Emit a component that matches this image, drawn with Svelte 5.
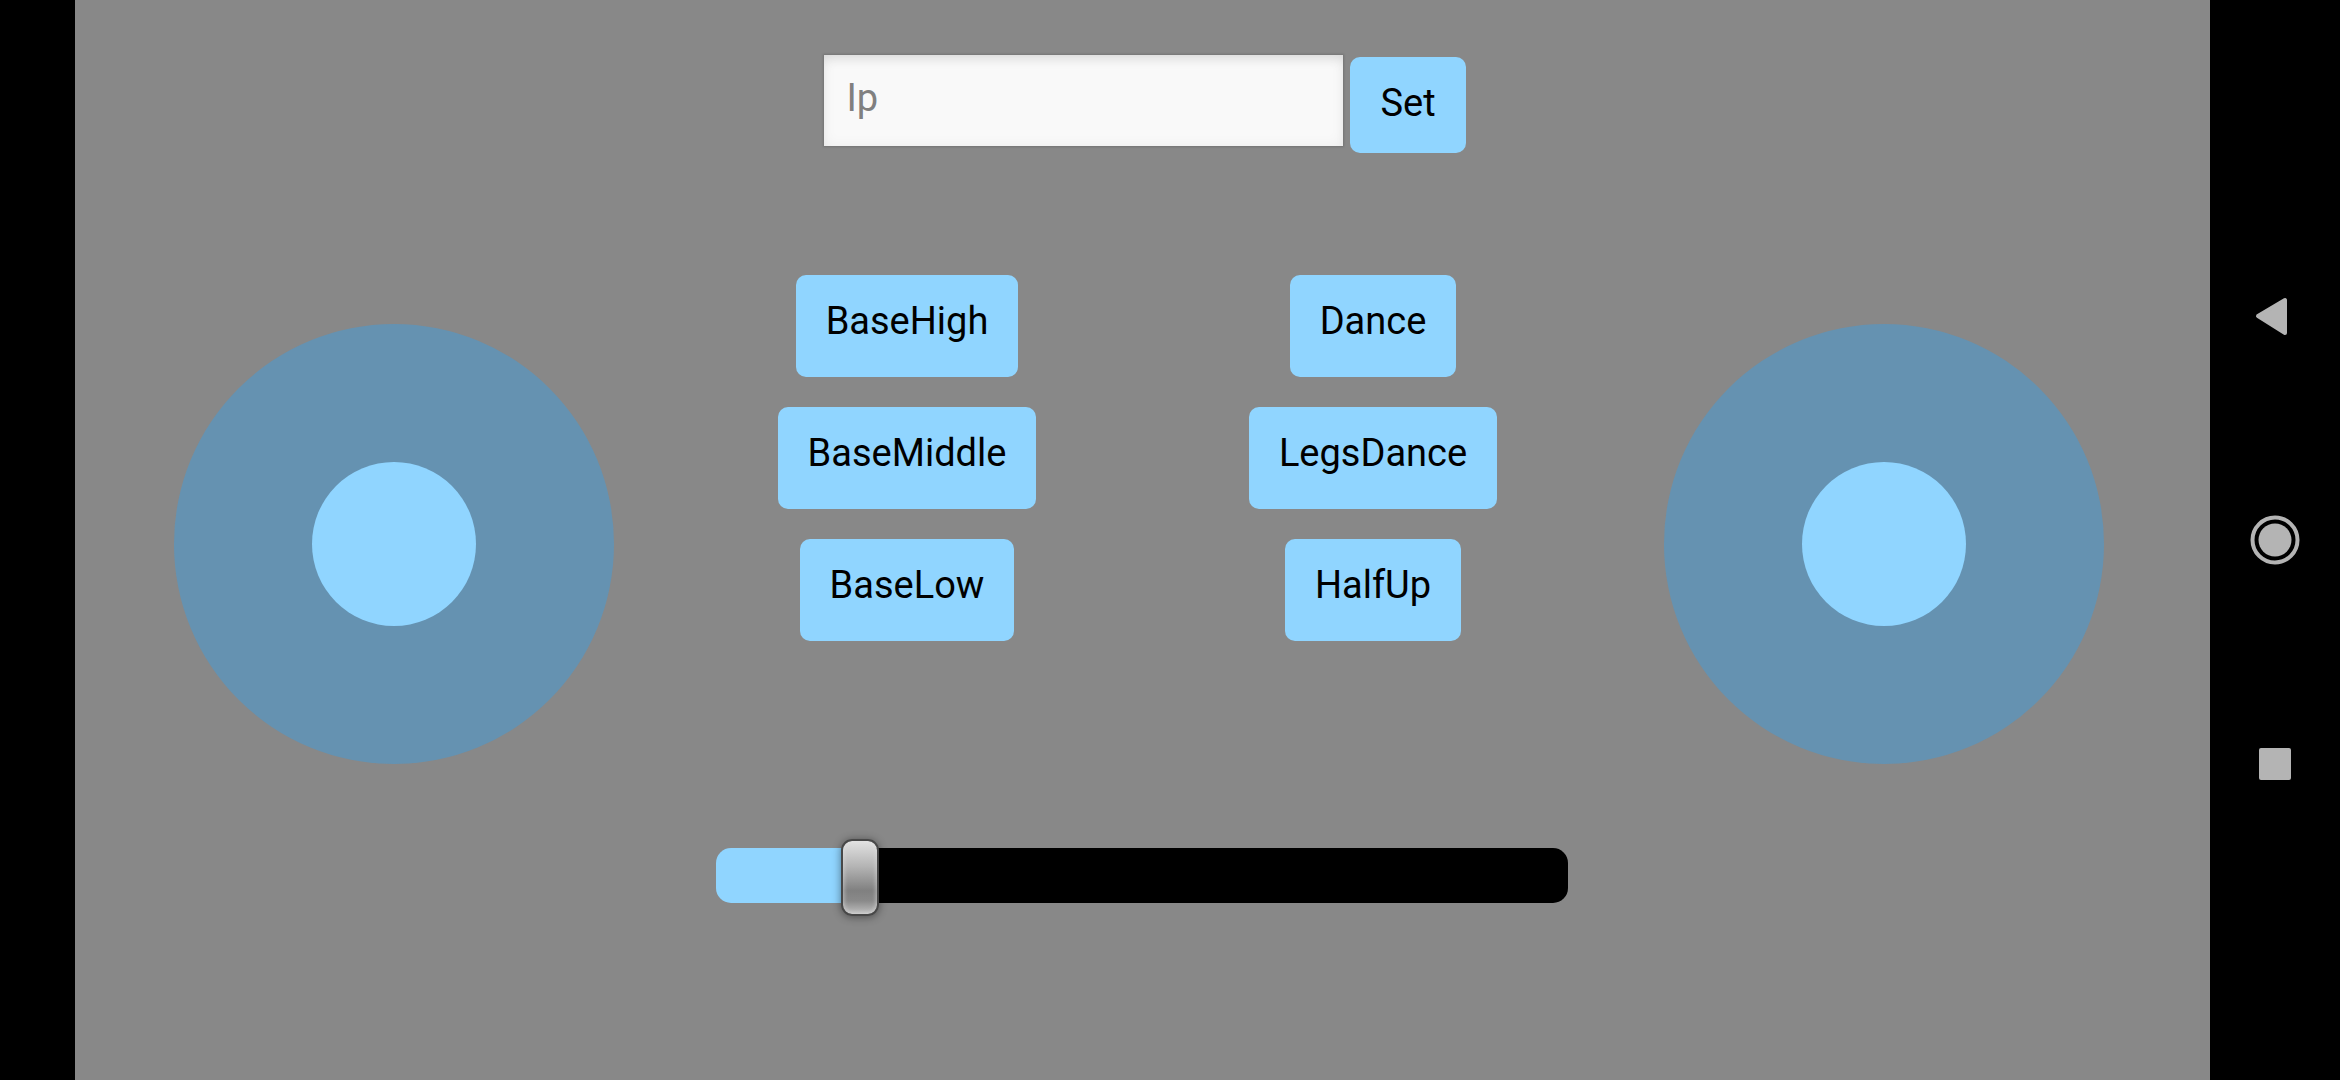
<script>
  let ip = $state('');
  let level = $state(154);
  const maxLevel = 1000;

  const actions = ['BaseHigh', 'Dance', 'BaseMiddle', 'LegsDance', 'BaseLow', 'HalfUp'];
</script>

<div class="screen">
  <main>
    <button class="joystick" aria-label="Left joystick"><span class="knob"></span></button>

    <div class="panel">
      <form class="address" onsubmit={(e) => e.preventDefault()}>
        <input class="ip" type="text" placeholder="Ip" aria-label="Ip" bind:value={ip} />
        <button class="btn set" type="submit">Set</button>
      </form>

      <div class="actions">
        {#each actions as action}
          <button class="btn" type="button">{action}</button>
        {/each}
      </div>

      <div class="level">
        <input
          class="slider"
          type="range"
          min="0"
          max={maxLevel}
          aria-label="Level"
          bind:value={level}
          style:--ratio={level / maxLevel}
        />
      </div>
    </div>

    <button class="joystick" aria-label="Right joystick"><span class="knob"></span></button>
  </main>

  <nav aria-label="System navigation">
    <button class="nav-btn" aria-label="Back">
      <svg viewBox="0 0 50 50"><path d="M8 25 L35 9 V42 Z" stroke-width="4" stroke-linejoin="round" /></svg>
    </button>
    <button class="nav-btn" aria-label="Home">
      <svg viewBox="0 0 50 50">
        <circle class="ring" cx="25" cy="25" r="22.500" stroke-width="4" />
        <circle cx="25" cy="25" r="16.500" stroke="none" />
      </svg>
    </button>
    <button class="nav-btn" aria-label="Recent apps">
      <svg viewBox="0 0 50 50"><rect x="9" y="9" width="32" height="32" rx="2" stroke="none" /></svg>
    </button>
  </nav>
</div>

<style>
  :global(body) {
    margin: 0;
    background: #000;
  }

  .screen {
    display: flex;
    min-height: 100vh;
    padding-left: 75px;
    box-sizing: border-box;
    background: #000;
    font-family: Roboto, sans-serif;
  }

  button,
  input {
    margin: 0;
    border: 0;
    font: inherit;
    box-sizing: border-box;
  }

  button {
    cursor: pointer;
  }

  main {
    flex: 1;
    display: flex;
    padding: 0 106px 0 99px;
    background: #888;
  }

  .joystick {
    flex: none;
    display: flex;
    align-items: center;
    justify-content: center;
    align-self: center;
    width: 440px;
    height: 440px;
    margin-top: 8px;
    padding: 0;
    border-radius: 50%;
    background: #6592b1;
  }

  .knob {
    width: 164px;
    height: 164px;
    border-radius: 50%;
    background: #90d5ff;
  }

  .panel {
    flex: 1;
    min-width: 0;
    padding-top: 55px;
  }

  .address {
    display: flex;
    justify-content: center;
    gap: 7px;
    height: 98px;
    padding-left: 12px;
  }

  .ip {
    width: 519px;
    height: 91px;
    padding: 20px 22px 25px;
    border-radius: 0;
    outline: 0;
    background: #f9f9f9;
    box-shadow:
      0 0 2px 1px rgba(0, 0, 0, 0.15),
      inset 0 0 14px rgba(0, 0, 0, 0.05),
      inset 0 8px 12px -4px rgba(0, 0, 0, 0.1);
    color: #000;
    font-size: 38px;
    line-height: 46px;
  }

  .ip::placeholder {
    color: #808080;
    opacity: 1;
  }

  .btn {
    padding: 23px 30px 33px;
    border-radius: 10px;
    background: #90d5ff;
    color: #000;
    font-size: 38px;
    line-height: 46px;
  }

  .set {
    align-self: flex-end;
    padding-bottom: 27px;
  }

  .actions {
    display: grid;
    grid-template-columns: 1fr 1fr;
    justify-items: center;
    row-gap: 30px;
    margin-top: 122px;
    padding: 0 58px 0 60px;
  }

  .level {
    display: flex;
    margin-top: 207px;
    padding: 0 96px 0 102px;
  }

  .slider {
    appearance: none;
    width: 100%;
    height: 55px;
    background: transparent;
    outline: 0;
  }

  .slider::-webkit-slider-runnable-track {
    height: 55px;
    border-radius: 15px;
    background: linear-gradient(#90d5ff, #90d5ff) 0 0 / calc(19px + (100% - 38px) * var(--ratio)) 100% no-repeat #000;
  }

  .slider::-webkit-slider-thumb {
    appearance: none;
    width: 38px;
    height: 77px;
    margin-top: -9px;
    border: 2px solid #484848;
    border-radius: 11px;
    background: linear-gradient(#e2e2e2, #b4b4b4 35%, #808080 68%, #8a8a8a 82%, #c0c0c0) padding-box;
    box-shadow:
      inset 0 0 4px 1px rgba(225, 225, 225, 0.6),
      0 1px 9px rgba(0, 0, 0, 0.45);
  }

  nav {
    flex: none;
    display: flex;
    flex-direction: column;
    align-items: center;
    justify-content: center;
    gap: 174px;
    width: 130px;
  }

  .nav-btn {
    width: 50px;
    height: 50px;
    padding: 0;
    background: none;
  }

  .nav-btn svg {
    display: block;
    width: 50px;
    height: 50px;
    fill: #b4b4b4;
    stroke: #b4b4b4;
  }

  .nav-btn .ring {
    fill: none;
  }
</style>
